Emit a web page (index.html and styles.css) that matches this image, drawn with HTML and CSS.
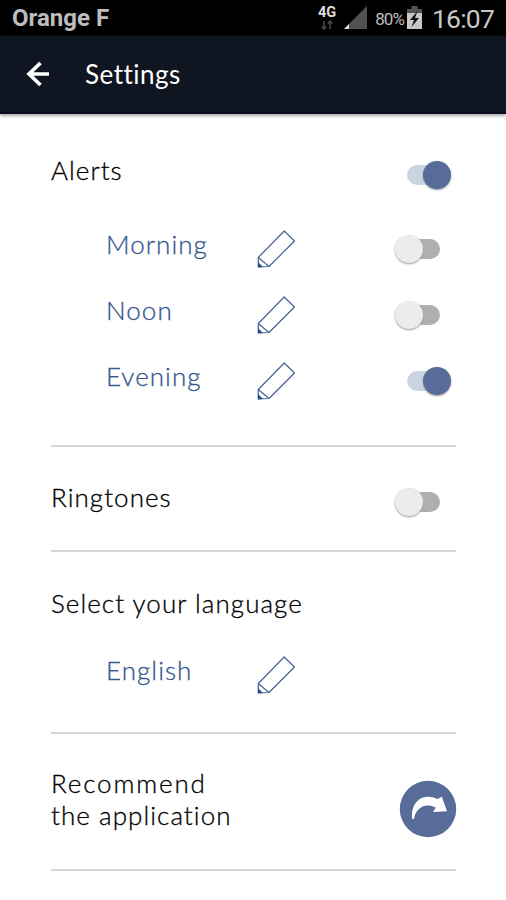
FILE: index.html
```html
<!DOCTYPE html>
<html lang="en">
<head>
<meta charset="utf-8">
<title>Settings</title>
<link rel="stylesheet" href="styles.css">
</head>
<body>
<svg class="defs" width="0" height="0">
  <symbol id="pencil" viewBox="0 0 40 40">
    <path d="M2.3 28.5 28.2 2 38.5 12 13 37.5 2.3 38Z M2.3 28.5 13 37.5" fill="none" stroke="#4a6597" stroke-width="1.25" stroke-linejoin="round"/>
    <path d="M2 33 7 38 2 38.3Z" fill="#244a84"/>
  </symbol>
</svg>
<div class="status">
  <span class="carrier">Orange F</span>
  <div class="network"><span>4G</span>
    <svg width="12" height="10" viewBox="0 0 12 10"><path d="M3 1v8M.8 6.5 3 9l2-2.5M9 9V1M6.8 3.5 9 1l2.2 2.5" fill="none" stroke="#444" stroke-width="1.7"/></svg>
  </div>
  <svg class="signal" width="24" height="24" viewBox="0 0 24 24"><path d="M23 0V23H0Z" fill="#515151"/><path d="M5 18v5H0Z" fill="#ddd"/></svg>
  <span class="percent">80%</span>
  <svg class="battery" width="15" height="24" viewBox="0 0 15 24"><path d="M4.5 0h6v3H15v5H0V3h4.5Z" fill="#555"/><path d="M0 7h15v16H0Z" fill="#c8c8c8"/><path d="M10.5 5 3 14h4l-2.5 7L12 12H8Z" fill="#111"/></svg>
  <span class="clock">16:07</span>
</div>
<header class="bar">
  <svg class="back" width="25" height="28" viewBox="0 0 25 28"><path d="M14.5 3 3 14 14.5 25M3 14H23" fill="none" stroke="#fff" stroke-width="3.7"/></svg>
  <h1>Settings</h1>
</header>
<main>
  <section class="alerts">
    <div class="row"><span class="label">Alerts</span><i class="switch on"></i></div>
    <div class="group">
      <div class="row"><span class="label sub">Morning</span><svg class="pencil"><use href="#pencil"/></svg><i class="switch"></i></div>
      <div class="row"><span class="label sub">Noon</span><svg class="pencil"><use href="#pencil"/></svg><i class="switch"></i></div>
      <div class="row"><span class="label sub">Evening</span><svg class="pencil"><use href="#pencil"/></svg><i class="switch on"></i></div>
    </div>
  </section>
  <section class="ringtones">
    <div class="row"><span class="label">Ringtones</span><i class="switch"></i></div>
  </section>
  <section class="language">
    <div class="row"><span class="label">Select your language</span></div>
    <div class="row"><span class="label sub">English</span><svg class="pencil"><use href="#pencil"/></svg></div>
  </section>
  <section class="recommend">
    <div class="label"><span class="wide">Recommend</span><br>the application</div>
    <svg class="share" width="58" height="58" viewBox="0 0 58 58"><circle cx="29" cy="29" r="28.2" fill="#576c98"/><path d="M13.3 39.5C11 24 22 11.5 38.5 19L42.8 16.8 48 31.2 34 32 36.8 27.5C27 22.5 17 27 15.2 38.5Z" fill="#fff"/></svg>
  </section>
</main>
</body>
</html>
```
FILE: styles.css
```css
* { box-sizing: border-box; }
body { margin: 0; height: 900px; overflow: hidden; background: #fff; font-family: Lato, "Liberation Sans", sans-serif; }
.defs { display: block; }
svg { flex: none; }
.status { height: 36px; background: #000; display: flex; align-items: center; padding: 0 12px 0 12px; font-family: Roboto, sans-serif; color: #bdbdbd; }
.carrier { font-size: 24px; font-weight: 700; line-height: 36px; margin-right: auto; }
.network { width: 20px; display: flex; flex-direction: column; align-items: center; font-size: 14.5px; line-height: 15px; font-weight: 700; color: #ddd; margin: -1px 7px 0 0; }
.percent { font-size: 17px; margin: 1px 3px 0 7px; letter-spacing: -.9px; }
.battery { margin-top: -1px; margin-right: 10px; }
.clock { font-size: 26.5px; line-height: 36px; color: #c8c8c8; margin-top: 2px; letter-spacing: -.8px; }
.bar { height: 78px; background: #101621; border-bottom: 2px solid #0a0a20; display: flex; align-items: center; padding-left: 26px; box-shadow: 0 2px 3px #aaa; }
.bar h1 { margin: 0 0 0 34px; color: #fff; font-size: 26px; font-weight: 400; line-height: 32px; letter-spacing: .5px; }
main { padding: 0 50px 0 51px; }
section { border-bottom: 2px solid #d5d5d5; }
.row { height: 66px; display: flex; align-items: center; }
.label { color: #000; font-size: 26px; font-weight: 300; line-height: 32px; white-space: nowrap; letter-spacing: 1.05px; -webkit-text-stroke: .3px currentColor; }
.row .label { margin-bottom: 2px; }
.wide { letter-spacing: 1.85px; }
.sub { color: #36568f; width: 150px; margin-left: 55px; }
.pencil { width: 40px; height: 40px; margin-top: 8px; }
.switch { position: relative; width: 33px; height: 20px; margin: 7px 16px 0 auto; border-radius: 10px; background: #afafaf; }
.switch::before { content: ""; position: absolute; left: -12px; top: -4px; width: 28px; height: 28px; border-radius: 50%; background: #ececec; box-shadow: 0 1px 2px #999; }
.switch.on { background: #cbd5e2; }
.switch.on::before { left: 16px; background: #576c98; }
.alerts { height: 333px; padding-top: 24px; }
.group { padding-top: 8px; }
.ringtones { height: 105px; padding-top: 18px; }
.language { height: 182px; padding-top: 19px; }
.language .row + .row { margin-top: 1px; }
.recommend { height: 137px; padding-top: 34px; display: flex; justify-content: space-between; align-items: flex-start; }
.recommend .label { line-height: 31.5px; }
.share { margin: 12px -1px 0 0; }
```
